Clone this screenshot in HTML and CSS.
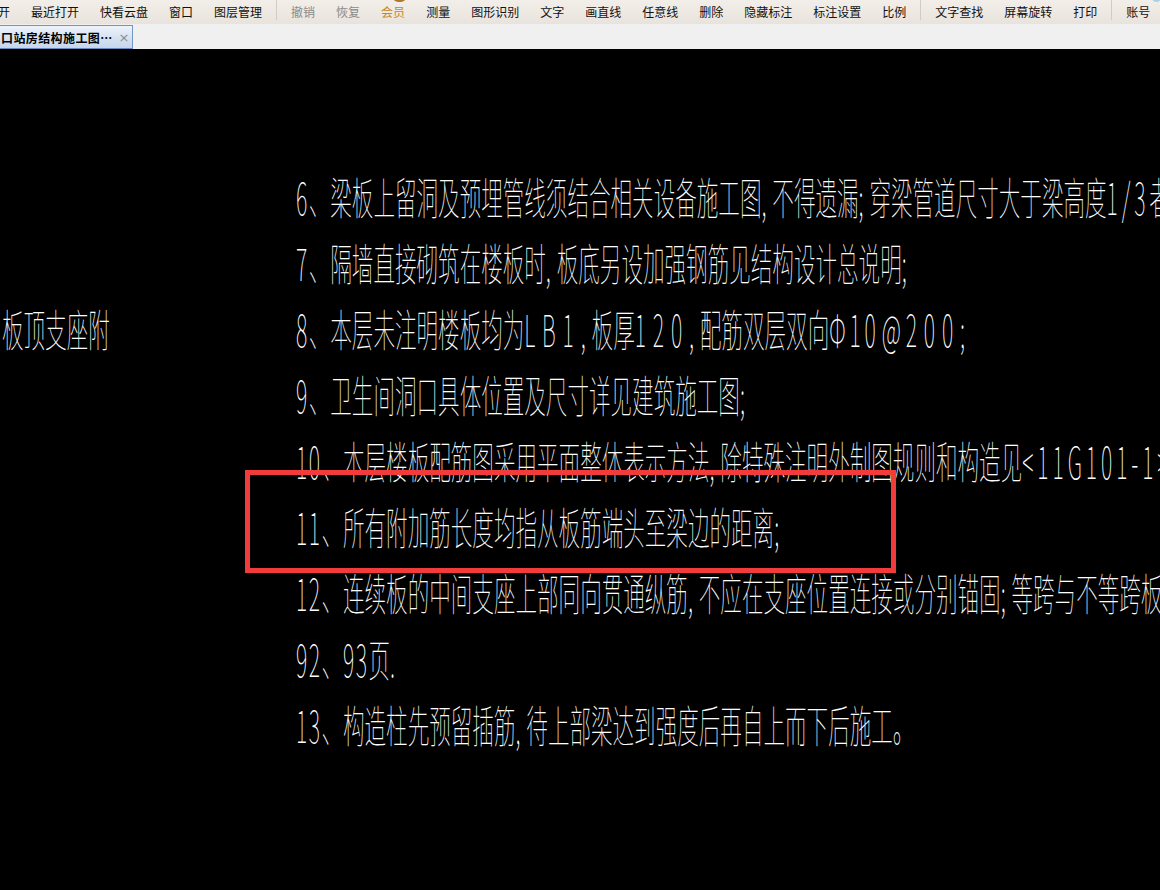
FILE: index.html
```html
<!DOCTYPE html>
<html lang="zh-CN">
<head>
<meta charset="utf-8">
<title>CAD 看图</title>
<link rel="stylesheet" href="styles.css">
</head>
<body>
<div class="app">
  <div class="toolbar">
    <span class="ti first">开</span>
    <span class="ti">最近打开</span>
    <span class="ti">快看云盘</span>
    <span class="ti">窗口</span>
    <span class="ti">图层管理</span>
    <span class="sep"></span>
    <span class="ti off">撤销</span>
    <span class="ti off">恢复</span>
    <span class="ti vip">会员<i class="crown"></i></span>
    <span class="ti">测量</span>
    <span class="ti">图形识别</span>
    <span class="ti">文字</span>
    <span class="ti">画直线</span>
    <span class="ti">任意线</span>
    <span class="ti">删除</span>
    <span class="ti">隐藏标注</span>
    <span class="ti">标注设置</span>
    <span class="ti">比例</span>
    <span class="sep"></span>
    <span class="ti">文字查找</span>
    <span class="ti">屏幕旋转</span>
    <span class="ti">打印</span>
    <span class="sep"></span>
    <span class="ti acct">账号<i class="avatar"></i></span>
  </div>
  <div class="tabbar">
    <div class="tab">
      <span class="tab-title">口站房结构施工图…</span>
      <span class="tab-close">×</span>
    </div>
  </div>
  <div class="canvas">
    <div class="notes">
      <div class="side ln">板顶支座附</div>
      <div class="ln main"><span class="no">6</span>、梁板上留洞及预埋管线须结合相关设备施工图<span class="p">,</span>不得遗漏<span class="p">;</span>穿梁管道尺寸大于梁高度<span class="lat">1/3</span>者</div>
      <div class="ln main"><span class="no">7</span>、隔墙直接砌筑在楼板时<span class="p">,</span>板底另设加强钢筋见结构设计总说明<span class="p">;</span></div>
      <div class="ln main"><span class="no">8</span>、本层未注明楼板均为<span class="lat wide">LB1</span><span class="p">,</span>板厚<span class="lat wide">120</span><span class="p">,</span>配筋双层双向<span class="lat">Φ10</span><span class="at">@</span><span class="lat wide">200</span><span class="p">;</span></div>
      <div class="ln main"><span class="no">9</span>、卫生间洞口具体位置及尺寸详见建筑施工图<span class="p">;</span></div>
      <div class="ln main"><span class="no">10</span>、本层楼板配筋图采用平面整体表示方法<span class="p">,</span>除特殊注明外制图规则和构造见<span class="lat">&lt;11G101-1&gt;</span></div>
      <div class="ln main"><span class="no">11</span>、所有附加筋长度均指从板筋端头至梁边的距离<span class="p">;</span></div>
      <div class="ln main"><span class="no">12</span>、连续板的中间支座上部同向贯通纵筋<span class="p">,</span>不应在支座位置连接或分别锚固<span class="p">;</span>等跨与不等跨板</div>
      <div class="ln main"><span class="no">92</span>、<span class="no">93</span>页.</div>
      <div class="ln main"><span class="no">13</span>、构造柱先预留插筋<span class="p">,</span>待上部梁达到强度后再自上而下后施工。</div>
    </div>
    <div class="mark"></div>
  </div>
</div>
</body>
</html>
```
FILE: styles.css
```css
html, body {
  margin: 0;
  padding: 0;
  background: #000;
}
.app {
  width: 1160px;
  height: 890px;
  overflow: hidden;
  display: flex;
  flex-direction: column;
  font-family: "Noto Sans CJK SC", "Noto Sans", sans-serif;
}
.toolbar {
  height: 24px;
  flex: none;
  display: flex;
  align-items: flex-start;
  gap: 21px;
  background: linear-gradient(#f2eee9, #e9e3dd);
  overflow: hidden;
}
.ti {
  position: relative;
  font-size: 12px;
  line-height: 23px;
  height: 22px;
  color: #111;
  white-space: nowrap;
}
.ti.first { margin-left: -2px; }
.ti.off { color: #8a8a8a; }
.ti.vip { color: #c8871b; }
.crown {
  position: absolute;
  left: 12px;
  top: -3px;
  width: 13px;
  height: 5px;
  border-radius: 0 0 7px 7px;
  background: #b07a2e;
}
.avatar {
  position: absolute;
  left: 26px;
  top: -3px;
  width: 9px;
  height: 5px;
  border-radius: 0 0 5px 5px;
  background: #a9cfe9;
}
.sep {
  width: 1px;
  height: 20px;
  margin: 0 -7px;
  background: #d2ccc6;
}
.tabbar {
  height: 25px;
  flex: none;
  background: #f0f0f0;
  display: flex;
  align-items: flex-end;
}
.tab {
  box-sizing: border-box;
  height: 24px;
  width: 144px;
  margin-left: -11px;
  padding-left: 11px;
  border: 1px solid #7595c4;
  border-bottom-color: #6a8cc0;
  background: linear-gradient(#eef3fa, #d3e0f1 60%, #c6d6ec);
  display: flex;
  align-items: center;
}
.tab-title {
  font-size: 12px;
  font-weight: 700;
  letter-spacing: 0.4px;
  color: #000;
  white-space: nowrap;
}
.tab-close {
  margin-left: 6px;
  font-family: "DejaVu Sans", sans-serif;
  font-size: 13px;
  color: #8c8c8c;
}
.canvas {
  flex: 1;
  position: relative;
  background: #000;
  overflow: hidden;
}
.notes {
  display: grid;
  grid-template-columns: 296px 1fr;
  grid-auto-rows: 66px;
  padding-top: 114px;
}
.ln {
  font-size: 44px;
  line-height: 66px;
  font-weight: 100;
  color: #fff;
  white-space: nowrap;
  transform: scaleX(0.49);
  transform-origin: 0 50%;
  -webkit-font-smoothing: antialiased;
}
.main { grid-column: 2; }
.side {
  grid-column: 1;
  grid-row: 3;
  margin-left: 2px;
}
.no { letter-spacing: 3px; }
.lat { letter-spacing: 8px; }
.lat.wide { letter-spacing: 14px; }
.at { letter-spacing: 10px; padding-left: 4px; }
.p { letter-spacing: 12px; }
.mark {
  position: absolute;
  left: 245px;
  top: 421px;
  width: 641px;
  height: 93px;
  border: 5px solid #f23b3b;
}
```
